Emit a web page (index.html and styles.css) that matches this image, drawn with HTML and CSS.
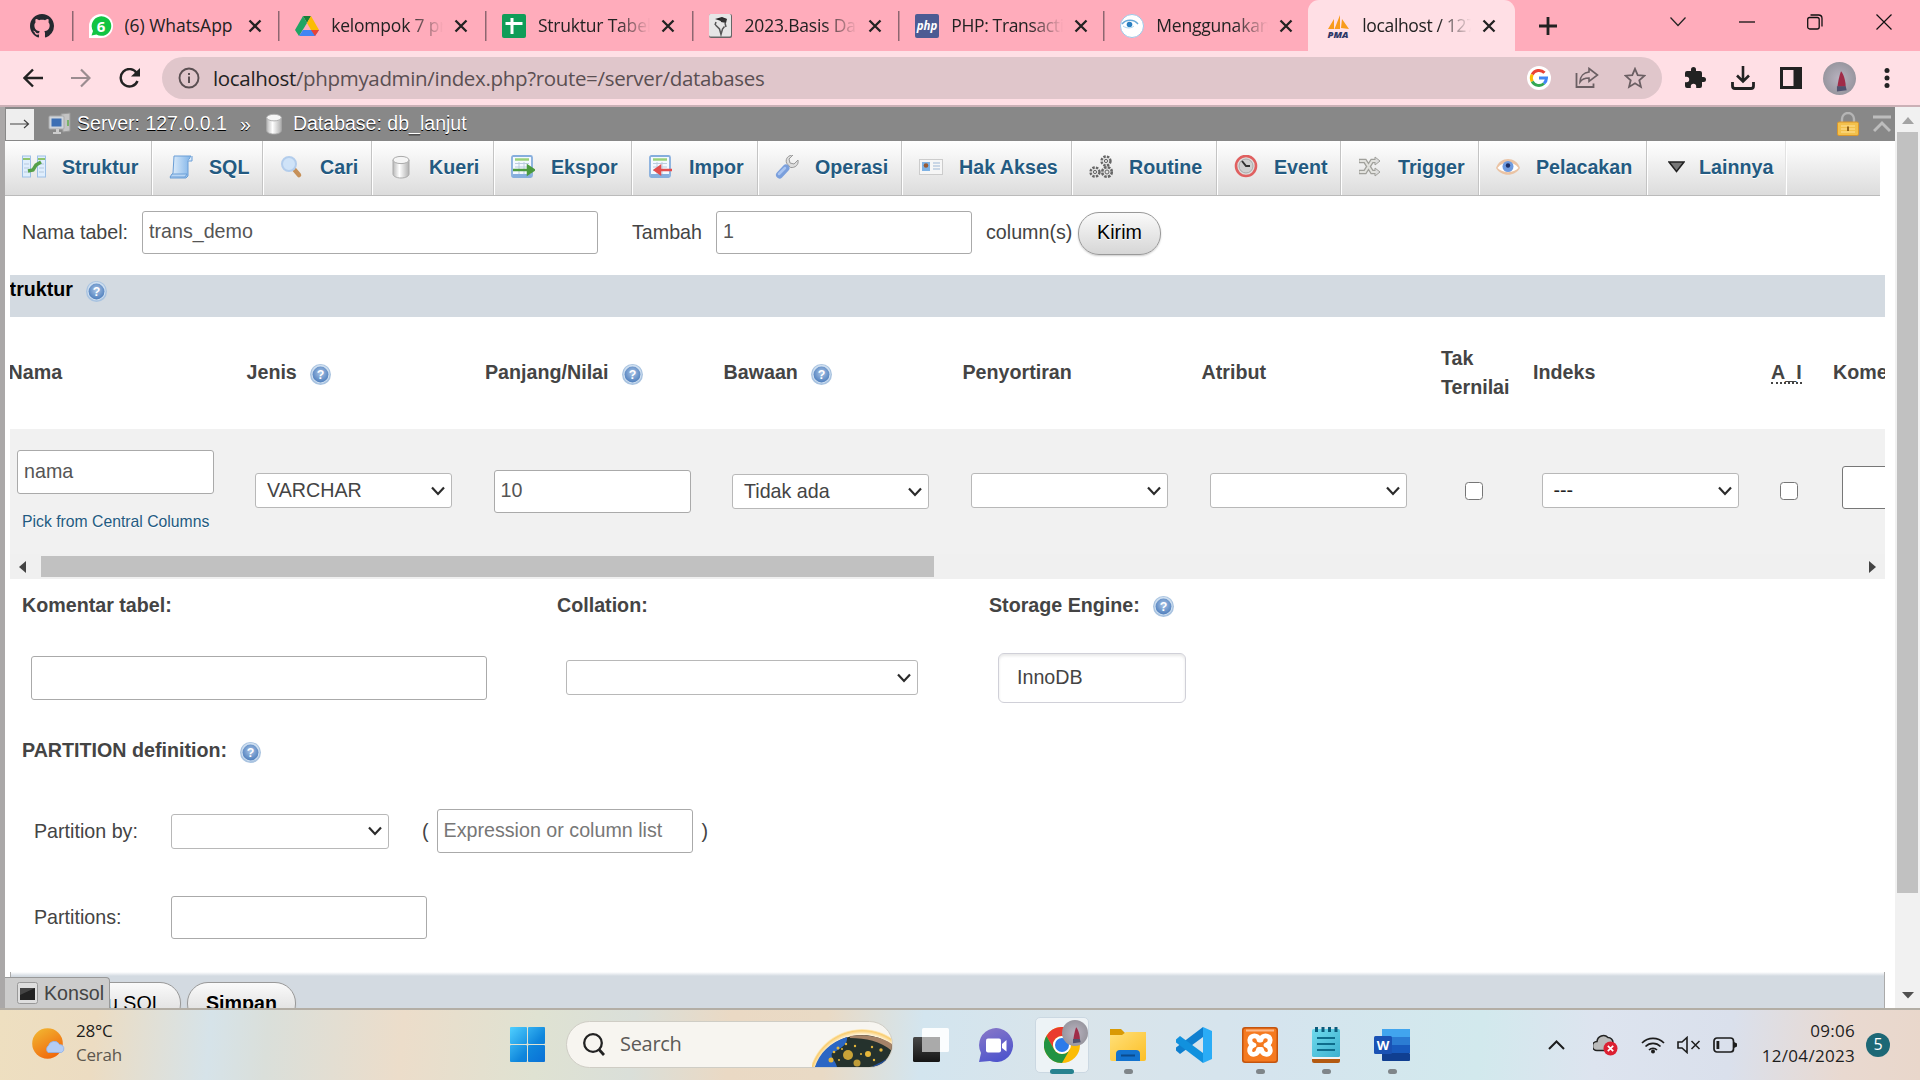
FILE: index.html
```html
<!DOCTYPE html>
<html lang="id">
<head>
<meta charset="utf-8">
<title>localhost / 127.0.0.1 / db_lanjut | phpMyAdmin</title>
<link rel="stylesheet" href="styles.css">
</head>
<body>
<svg width="0" height="0" class="defs" aria-hidden="true">
  <defs>
    <radialGradient id="gHelp" cx=".5" cy=".4" r=".6"><stop offset="0" stop-color="#a9c4e6"/><stop offset="1" stop-color="#4f7fbd"/></radialGradient>
    <linearGradient id="gCyl"><stop offset="0" stop-color="#b9b9b9"/><stop offset=".4" stop-color="#fff"/><stop offset="1" stop-color="#b0b0b0"/></linearGradient>
    <linearGradient id="gSun" x2=".6" y2="1"><stop offset="0" stop-color="#f2bc34"/><stop offset="1" stop-color="#f0690d"/></linearGradient>
    <linearGradient id="gWin" gradientUnits="userSpaceOnUse" x1="0" y1="0" x2="35" y2="35"><stop offset="0" stop-color="#4fd0ff"/><stop offset=".6" stop-color="#0f86dc"/><stop offset="1" stop-color="#0a70d6"/></linearGradient>
    <linearGradient id="gDark" x2="0" y2="1"><stop offset="0" stop-color="#484848"/><stop offset="1" stop-color="#151515"/></linearGradient>
    <linearGradient id="gChat" x2=".4" y2="1"><stop offset="0" stop-color="#8a79c8"/><stop offset="1" stop-color="#5156cc"/></linearGradient>
    <linearGradient id="gFold" x2="1" y2="1"><stop offset="0" stop-color="#ffe07a"/><stop offset="1" stop-color="#fcbf26"/></linearGradient>
    <linearGradient id="gPad" x2="1" y2="1"><stop offset="0" stop-color="#6fdaec"/><stop offset="1" stop-color="#3cb0cf"/></linearGradient>
    <linearGradient id="gScroll" x2="1"><stop offset="0" stop-color="#e8f3fd"/><stop offset="1" stop-color="#7fb3e8"/></linearGradient>
    <radialGradient id="gPhoto"><stop offset="0" stop-color="#b9b3c0"/><stop offset="1" stop-color="#98969f"/></radialGradient>
    <symbol id="close" viewBox="0 0 14 14"><path d="M1.500 1.500l11 11M12.500 1.500l-11 11" stroke="#222" stroke-width="2.300" fill="none"/></symbol>
    <symbol id="caret" viewBox="0 0 14 10"><path d="M1 1.500l6 6.500 6-6.500" fill="none" stroke="#2b2b2b" stroke-width="2.200"/></symbol>
    <symbol id="help" viewBox="0 0 22 22"><circle cx="11" cy="11" r="11" fill="#a9c3e0"/><circle cx="11" cy="10.500" r="9.600" fill="#cfdff0"/><circle cx="11" cy="11" r="8.300" fill="url(#gHelp)"/><text x="11" y="15.500" text-anchor="middle" font-family="Liberation Sans" font-weight="700" font-size="13" fill="#fff">?</text></symbol>
    <symbol id="photo" viewBox="0 0 32 32"><circle cx="16" cy="16" r="16" fill="url(#gPhoto)"/><path d="M17.500 9c-1.500 3-3 11-3.500 15h8c0-6-2-12-4.500-15z" fill="#a02c48"/><path d="M13.500 23.500h8.500l1 4-9.500 1z" fill="#50526e"/></symbol>
    <symbol id="cyl" viewBox="0 0 24 24"><path d="M4 5v14c0 2 3 4 8 4s8-2 8-4V5z" fill="url(#gCyl)" stroke="#aaa"/><ellipse cx="12" cy="5" rx="8" ry="3.600" fill="#f5f5f5" stroke="#aaa"/></symbol>
    <symbol id="sheet" viewBox="0 0 24 24"><rect x="1" y="1" width="20" height="21" rx="1.500" fill="#f4f9ff" stroke="#86aedd" stroke-width="1.800"/><path d="M4 4.500h14" stroke="#9bd07a" stroke-width="2.500"/><path d="M4 8.500h14M4 12h14M4 15.500h14M8 7v12M13 7v12" stroke="#bccde0"/><path d="M2 20h18" stroke="#86aedd" stroke-width="2"/></symbol>
  </defs>
</svg>

<header class="tabstrip">
  <div class="pin"><svg width="24" height="24" viewBox="0 0 16 16"><path fill="#24292f" d="M8 0C3.580 0 0 3.580 0 8c0 3.540 2.290 6.530 5.470 7.590.4.070.55-.17.55-.38 0-.19-.01-.82-.01-1.490-2.010.37-2.530-.49-2.690-.94-.09-.23-.48-.94-.82-1.130-.28-.15-.68-.52-.01-.53.63-.01 1.080.58 1.230.82.72 1.210 1.870.87 2.330.66.07-.52.28-.87.51-1.070-1.780-.2-3.640-.89-3.640-3.950 0-.87.31-1.590.82-2.150-.08-.2-.36-1.020.08-2.120 0 0 .67-.21 2.200.82.64-.18 1.320-.27 2-.27s1.360.09 2 .27c1.530-1.040 2.200-.82 2.200-.82.44 1.100.16 1.920.08 2.120.51.56.82 1.270.82 2.150 0 3.070-1.870 3.750-3.650 3.950.29.25.54.73.54 1.480 0 1.070-.01 1.930-.01 2.200 0 .21.15.46.55.38A8.010 8.010 0 0 0 16 8c0-4.420-3.580-8-8-8z"/></svg></div>
  <div class="tab"><svg width="24" height="24"><path d="M0 24V12A12 12 0 1 1 12 24z" fill="#fff"/><path d="M2.500 21.500L4 17a9.800 9.800 0 1 1 3.500 3.500z" fill="#12c443"/><text x="12" y="17.500" text-anchor="middle" font-family="Open Sans" font-weight="700" font-size="15" fill="#fff">6</text></svg><span class="t">(6) WhatsApp</span><svg class="x" width="14" height="14"><use href="#close"/></svg></div>
  <div class="tab"><svg width="24" height="24"><path d="M8 2h8l-4 7z" fill="#188038"/><path d="M8 2L0 16l4 6L12 9z" fill="#1fa463"/><path d="M16 2l8 14h-8L12 9z" fill="#fbbc04"/><path d="M24 16l-4 6H4l4-6z" fill="#4285f4"/><path d="M16 16h8l-4 6z" fill="#ea4335"/></svg><span class="t">kelompok 7 pro</span><svg class="x" width="14" height="14"><use href="#close"/></svg></div>
  <div class="tab"><svg width="24" height="24"><rect width="24" height="24" rx="2" fill="#109d58"/><path d="M10 4v16M3.500 9.500h17" stroke="#fff" stroke-width="3"/></svg><span class="t">Struktur Tabel d</span><svg class="x" width="14" height="14"><use href="#close"/></svg></div>
  <div class="tab"><svg width="24" height="24"><rect x="0" y="0" width="23" height="24" rx="2" fill="#666"/><rect width="22" height="22.500" rx="1.500" fill="#e6e6e6"/><path d="M6 5l7-2 5 2-6 2z" fill="#222"/><path d="M11 4l7 1-1 4-5-1z" fill="#333"/><path d="M7 8l-1 3M16 9l1 4M6.500 11l4 4 1.500 5.500 1.500-5.500 2-2.500" stroke="#555" fill="none" stroke-width="1.500"/></svg><span class="t">2023.Basis Data</span><svg class="x" width="14" height="14"><use href="#close"/></svg></div>
  <div class="tab short"><svg width="24" height="24"><rect width="24" height="24" rx="2" fill="#4c5b93"/><text x="12" y="16" text-anchor="middle" font-family="Open Sans" font-weight="700" font-style="italic" font-size="11.500" fill="#fff">php</text></svg><span class="t">PHP: Transactions</span><svg class="x" width="14" height="14"><use href="#close"/></svg></div>
  <div class="tab last"><svg width="24" height="24"><circle cx="12" cy="12" r="11.500" fill="#fff" stroke="#9cc8e8"/><path d="M2 10c4-5 12-5 16 0" stroke="#67a9d8" stroke-width="1.400" fill="none"/><circle cx="9.500" cy="10.500" r="2.800" fill="#2a7fc0"/><path d="M3 12c4 3 9 2 11 0" stroke="#a8d4ee" fill="none"/></svg><span class="t">Menggunakan</span><svg class="x" width="14" height="14"><use href="#close"/></svg></div>
  <div class="tab active"><svg width="24" height="24"><path d="M2 15l6-10v10zM8.500 15L14 1v14zM15 14l1-9 7 10z" fill="#f89c1c"/><text x="12" y="24" text-anchor="middle" font-family="Open Sans" font-weight="800" font-style="italic" font-size="9.500" fill="#2d3767">PMA</text></svg><span class="t">localhost / 127.</span><svg class="x" width="14" height="14"><use href="#close"/></svg></div>
  <svg class="plus" width="18" height="18"><path d="M9 0v18M0 9h18" stroke="#222" stroke-width="2.800"/></svg>
  <div class="wincontrols">
    <svg width="16" height="10"><path d="M.5.500l7.500 8 7.500-8" fill="none" stroke="#222" stroke-width="1.200"/></svg>
    <svg width="16" height="10"><path d="M0 5h16" stroke="#111" stroke-width="1.300"/></svg>
    <svg width="16" height="16"><rect x=".7" y="3.500" width="11.500" height="11.500" rx="2" fill="none" stroke="#111" stroke-width="1.300"/><path d="M3.500 1h8c2 0 3.500 1.500 3.500 3.500v8" fill="none" stroke="#111" stroke-width="1.300"/></svg>
    <svg width="16" height="16"><path d="M.5.500l15 15M15.500.500l-15 15" stroke="#111" stroke-width="1.200"/></svg>
  </div>
</header>

<div class="toolbar">
  <svg class="nav" width="20" height="20"><path d="M20 10H2M10 1.500L1.500 10l8.500 8.500" fill="none" stroke="#222" stroke-width="2.400"/></svg>
  <svg class="nav" width="20" height="20"><path d="M0 10h18M10 1.500l8.500 8.500-8.500 8.500" fill="none" stroke="#9b8c90" stroke-width="2.200"/></svg>
  <svg class="nav" width="22" height="20"><path d="M18.500 13a8.700 8.700 0 1 1-.8-8" fill="none" stroke="#222" stroke-width="2.400"/><path d="M21 0v8.500h-9z" fill="#222"/></svg>
  <div class="omnibox">
    <svg width="22" height="22"><circle cx="11" cy="11" r="9.500" fill="none" stroke="#5a4f52" stroke-width="1.900"/><path d="M11 9.500V16M11 6v2" stroke="#5a4f52" stroke-width="2"/></svg>
    <span class="url"><b>localhost</b>/phpmyadmin/index.php?route=/server/databases</span>
    <svg width="24" height="24" viewBox="0 0 24 24"><circle cx="12" cy="12" r="12" fill="#fff"/><g fill="none" stroke-width="3"><path d="M5.200 8.500A7.600 7.600 0 0 1 17.500 6.800" stroke="#ea4335"/><path d="M5.200 15.500a7.600 7.600 0 0 1 0-7" stroke="#fbbc05"/><path d="M17 17.500a7.600 7.600 0 0 1-11.800-2" stroke="#34a853"/><path d="M12 12h7.500a7.600 7.600 0 0 1-2.500 5.500" stroke="#4285f4"/></g></svg>
    <svg class="sh" width="24" height="22"><path d="M1.500 6v14h17v-3.500" fill="none" stroke="#6b5f63" stroke-width="1.800"/><path d="M14 1.500L22.500 8 14 14.500V11c-4 0-7 1-9 4 0-6 4-9.500 9-10z" fill="none" stroke="#6b5f63" stroke-width="1.600"/></svg>
    <svg width="22" height="22" viewBox="0 0 22 22"><path d="M11 1.800l2.700 6.300 6.800.6-5.200 4.500 1.600 6.700L11 16.300l-5.900 3.600 1.600-6.700L1.500 8.700l6.800-.6z" fill="none" stroke="#6b5f63" stroke-width="1.800"/></svg>
  </div>
  <svg class="puzzle" width="24" height="24" viewBox="0 0 24 24"><path fill="#222" d="M20.500 11H19V7a2 2 0 0 0-2-2h-4V3.500a2.500 2.500 0 0 0-5 0V5H4a2 2 0 0 0-2 2v3.800h1.500a2.700 2.700 0 0 1 0 5.400H2V20a2 2 0 0 0 2 2h3.800v-1.500a2.700 2.700 0 0 1 5.400 0V22H17a2 2 0 0 0 2-2v-4h1.500a2.500 2.500 0 0 0 0-5z"/></svg>
  <svg class="download" width="24" height="24"><path d="M12 0v15M6 9.500l6 6 6-6" fill="none" stroke="#222" stroke-width="2.600"/><path d="M1.500 16v4c0 1.500 1 2.500 2.500 2.500h16c1.500 0 2.500-1 2.500-2.500v-4" fill="none" stroke="#222" stroke-width="2.800"/></svg>
  <svg class="panel" width="22" height="22"><path fill="#222" fill-rule="evenodd" d="M0 0h22v22H0zM3 3v16h10.500V3z"/></svg>
  <svg class="avatar" width="33" height="33"><use href="#photo"/></svg>
  <svg class="dots" width="6" height="20"><circle cx="3" cy="2.500" r="2.500" fill="#222"/><circle cx="3" cy="10" r="2.500" fill="#222"/><circle cx="3" cy="17.500" r="2.500" fill="#222"/></svg>
</div>

<main class="page">
  <div class="navedge"></div>
  <div class="content">
    <div class="crumbs">
      <span class="toggle"><svg width="20" height="10"><path d="M0 5h18M14 1l4.500 4L14 9" fill="none" stroke="#444" stroke-width="1.200"/></svg></span>
      <svg class="srv" width="24" height="24"><path d="M13 2l9-1v18l-7 1z" fill="#c4c4c4" stroke="#999"/><path d="M19 8h2v6h-2z" fill="#79b36a"/><rect x="1" y="4" width="15" height="13" rx="1" fill="#cfd4da" stroke="#aaa"/><rect x="3.500" y="6.500" width="10" height="8" fill="#3d6fb4"/><path d="M5 20h8v2H5zM8 17h3v3H8z" fill="#ccc"/></svg>
      <span class="c1">Server: 127.0.0.1</span><span class="raq">»</span>
      <svg width="22" height="24" viewBox="1 0 22 24"><use href="#cyl"/></svg>
      <span class="c2">Database: db_lanjut</span>
      <svg class="lock" width="22" height="24"><path d="M5 11V7a6 6 0 0 1 12 0v4" fill="none" stroke="#b5b5b5" stroke-width="2.400"/><rect x=".5" y="10" width="21" height="13.500" rx="1.500" fill="#f3c14c" stroke="#d9962c"/><path d="M4 14h14M4 17h14M4 20h14" stroke="#ffe39a"/><path d="M11 14.500v4.500" stroke="#8a5a10" stroke-width="1.800"/></svg>
      <svg class="top" width="18" height="18"><path d="M0 2h18M1 16l8-8 8 8" fill="none" stroke="#bdbdbd" stroke-width="3"/></svg>
    </div>

    <nav class="menu">
      <a style="width:147px"><svg width="24" height="24"><rect x="0.500" y="1" width="8" height="21" fill="#dfeefd" stroke="#9dc0e6"/><rect x="15.500" y="1" width="8" height="21" fill="#dfeefd" stroke="#9dc0e6"/><path d="M1 4h7M16 4h7" stroke="#8fc46d" stroke-width="2"/><path d="M2 9h5M2 13h5M2 17h5M17 9h5M17 13h5M17 17h5" stroke="#b7c9de"/><path d="M6 16l5-1 3-5 5-3" stroke="#55a048" stroke-width="3.500" fill="none"/></svg>Struktur</a>
      <a style="width:111px"><svg width="24" height="24"><path d="M5 1h17l-3 5v15l-2 2H1l3-5z" fill="url(#gScroll)" stroke="#6a9ed6"/><path d="M19 6h4V1" fill="#d8eafb" stroke="#6a9ed6"/><path d="M1 22h15l2-3H3z" fill="#b8d6f5" stroke="#6a9ed6"/></svg>SQL</a>
      <a style="width:109px"><svg width="24" height="24"><path d="M13 13l6 7" stroke="#c69058" stroke-width="4.500" stroke-linecap="round"/><circle cx="9" cy="9" r="7" fill="#cfe3f8" stroke="#b3cdec" stroke-width="2"/></svg>Cari</a>
      <a style="width:122px"><svg width="24" height="24"><use href="#cyl"/></svg>Kueri</a>
      <a style="width:138px"><svg width="24" height="24"><use href="#sheet"/><path d="M2 15h16M17 11l6 4-6 4z" stroke="#4b9a3e" stroke-width="2.500" fill="#4b9a3e"/></svg>Ekspor</a>
      <a style="width:126px"><svg width="24" height="24"><use href="#sheet"/><path d="M23 15H9M11 11.500l-5 3.500 5 3.500z" stroke="#e34d4d" stroke-width="2.500" fill="#e34d4d"/></svg>Impor</a>
      <a style="width:144px"><svg width="24" height="24"><path d="M23 5l-4 4-4-1-1-4 4-4c-4 0-8 3-6.500 8l4 4.500C20 13 24 10 23 5z" fill="#ddd" stroke="#999"/><path d="M11 13L4.500 20" stroke="#7a9fdc" stroke-width="7" stroke-linecap="round"/><path d="M10 13L4 19" stroke="#a9c4f0" stroke-width="2.500" stroke-linecap="round"/></svg>Operasi</a>
      <a style="width:170px"><svg width="24" height="24"><rect x=".5" y="4.500" width="23" height="15" fill="#f6f6f6" stroke="#ccc"/><rect x="3" y="7" width="8" height="9" fill="#7eb2e4"/><circle cx="7" cy="10.500" r="2.300" fill="#9a5a32"/><path d="M14 8h7M14 11h7M14 14h7" stroke="#9db7d6"/></svg>Hak Akses</a>
      <a style="width:145px"><svg width="24" height="24"><g fill="#e4e4e4" stroke="#666"><circle cx="17" cy="6" r="4.500" stroke-width="2.400" stroke-dasharray="2.400 1.200"/><circle cx="17" cy="6" r="1.600"/><circle cx="6" cy="17" r="4.500" stroke-width="2.400" stroke-dasharray="2.400 1.200"/><circle cx="6" cy="17" r="1.600"/><circle cx="18" cy="17" r="4.800" stroke-width="2.600" stroke-dasharray="2.600 1.200"/><circle cx="18" cy="17" r="2"/></g></svg>Routine</a>
      <a style="width:124px"><svg width="24" height="24"><circle cx="12" cy="11" r="10" fill="#dedede" stroke="#e06060" stroke-width="2.600"/><circle cx="12" cy="11" r="7" fill="#d0d0d0" stroke="#aaa"/><path d="M8 6l4 5h4" fill="none" stroke="#333" stroke-width="2"/></svg>Event</a>
      <a style="width:138px"><svg width="24" height="24"><path d="M1 6h6l7 11h4M1 17h6l7-11h4" fill="none" stroke="#a0a09b" stroke-width="4.500"/><path d="M17 2l5 4-5 4zM17 13l5 4-5 4z" fill="#ddd" stroke="#a0a09b"/><path d="M1.500 6H7l7 11h4M1.500 17H7l7-11h4" fill="none" stroke="#e2e2de" stroke-width="2"/></svg>Trigger</a>
      <a style="width:168px"><svg width="24" height="24"><path d="M0 13C4 1 20 1 24 13c-5 9-19 9-24 0z" fill="#eac3a4"/><path d="M1.500 13C6 5.500 18 5.500 22.500 13c-5 5.500-16 5.500-21 0z" fill="#fff"/><circle cx="12" cy="11.500" r="5.500" fill="#6f9be0"/><circle cx="12" cy="10.500" r="2.200" fill="#1c2f66"/></svg>Pelacakan</a>
      <a class="more" style="width:139px"><svg width="17" height="12"><path d="M1 1h15L8.500 10.500z" fill="#777" stroke="#222" stroke-width="1.600"/></svg>Lainnya</a>
    </nav>

    <div class="bar">
      <label class="l1">Nama tabel:</label><input class="in w456" value="trans_demo">
      <label class="l2">Tambah</label><input class="in w256" value="1">
      <label class="l3">column(s)</label><button class="btn kirim">Kirim</button>
    </div>

    <section class="fieldset">
      <div class="legend"><span class="s">Struktur</span><svg width="21" height="21"><use href="#help"/></svg></div>
      <div class="grid head">
        <span>Nama</span>
        <span>Jenis<svg width="21" height="21"><use href="#help"/></svg></span>
        <span>Panjang/Nilai<svg width="21" height="21"><use href="#help"/></svg></span>
        <span>Bawaan<svg width="21" height="21"><use href="#help"/></svg></span>
        <span>Penyortiran</span><span>Atribut</span><span>Tak<br>Ternilai</span><span>Indeks</span><span><abbr>A_I</abbr></span><span>Komentar</span>
      </div>
      <div class="grid row">
        <div class="name"><input class="in" value="nama"><a>Pick from Central Columns</a></div>
        <div><span class="sel">VARCHAR<svg width="14" height="10"><use href="#caret"/></svg></span></div>
        <div><input class="in len" value="10"></div>
        <div class="lower"><span class="sel">Tidak ada<svg width="14" height="10"><use href="#caret"/></svg></span></div>
        <div><span class="sel"><svg width="14" height="10"><use href="#caret"/></svg></span></div>
        <div><span class="sel"><svg width="14" height="10"><use href="#caret"/></svg></span></div>
        <div class="chk n"><i></i></div>
        <div><span class="sel dash">---<svg width="14" height="10"><use href="#caret"/></svg></span></div>
        <div class="chk"><i></i></div>
        <div class="kom"><input class="in"></div>
      </div>
      <div class="hscroll"><svg width="7" height="12"><path d="M7 0v12L0 6z" fill="#444"/></svg><span></span><svg class="r" width="7" height="12"><path d="M0 0v12l7-6z" fill="#444"/></svg></div>
    </section>

    <div class="opts labels"><b class="o1">Komentar tabel:</b><b class="o2">Collation:</b><b class="o3">Storage Engine:<svg width="21" height="21"><use href="#help"/></svg></b></div>
    <div class="opts fields"><input class="in w456"><span class="sel coll"><svg width="14" height="10"><use href="#caret"/></svg></span><span class="engine">InnoDB</span></div>
    <div class="partdef"><b>PARTITION definition:<svg width="21" height="21"><use href="#help"/></svg></b></div>
    <div class="part p1"><span class="pl">Partition by:</span><span class="sel pb"><svg width="14" height="10"><use href="#caret"/></svg></span><span class="op">(</span><input class="in w256" placeholder="Expression or column list"><span class="cp">)</span></div>
    <div class="part p2"><span class="pl">Partitions:</span><input class="in w256"></div>
    <div class="submit"><button class="btn sql">Pratinjau SQL</button><button class="btn simpan">Simpan</button></div>
    <div class="console"><svg width="21" height="22"><rect x=".5" y=".5" width="20" height="21" rx="2" fill="#dedede" stroke="#999"/><rect x="3" y="6" width="15" height="12" fill="#222"/><path d="M3 6h15L3 13z" fill="#444"/></svg>Konsol</div>
  </div>
  <div class="vscroll"><svg width="12" height="8"><path d="M0 7l6-7 6 7z" fill="#a3a3a3"/></svg><span></span><svg class="d" width="12" height="7"><path d="M0 0h12L6 6.500z" fill="#505050"/></svg></div>
</main>

<footer class="taskbar">
  <svg class="sun" width="34" height="32"><circle cx="15.500" cy="15.500" r="15.300" fill="url(#gSun)"/><path d="M16 24.500a4.500 4.500 0 0 1 .5-7 6 6 0 0 1 11-1 4.200 4.200 0 0 1 2 8z" fill="#b4cdf5" stroke="#8fb0ea" stroke-width=".8"/></svg>
  <div class="weather"><span>28°C</span><small>Cerah</small></div>
  <svg class="start" width="35" height="35"><g fill="url(#gWin)"><rect width="17" height="17" rx="1"/><rect x="18" width="17" height="17" rx="1"/><rect y="18" width="17" height="17" rx="1"/><rect x="18" y="18" width="17" height="17" rx="1"/></g></svg>
  <div class="search"><svg width="22" height="23"><circle cx="10" cy="10" r="8.800" fill="none" stroke="#222" stroke-width="2.300"/><path d="M16 16.500l5 5.500" stroke="#222" stroke-width="2.800"/></svg><span>Search</span>
    <svg class="globe" width="80" height="38" viewBox="0 0 80 38"><defs><radialGradient id="gGl" cx=".5" cy=".5" r=".5"><stop offset=".82" stop-color="#fff0cf"/><stop offset=".9" stop-color="#fff3d8"/><stop offset=".97" stop-color="#f9cd70"/><stop offset="1" stop-color="#fdf0d0"/></radialGradient></defs><circle cx="50" cy="54" r="54" fill="url(#gGl)"/><circle cx="50" cy="56" r="50" fill="#25322d"/><path d="M3 38C7 25 18 13 35 8c1 7-5 11-15 16-2 5 4 8 5 14z" fill="#2b66c4"/><path d="M60 38c5-4 12-5 20-12v12z" fill="#234f9c"/><path d="M38 7c14-2 30 0 42 8v7C68 12 54 9 38 9z" fill="#a58368"/><g fill="#e6b73b"><circle cx="36" cy="26" r="5" opacity=".85"/><circle cx="56" cy="25" r="3"/><circle cx="45" cy="34" r="3.500" opacity=".8"/><circle cx="19" cy="31" r="2.500"/><circle cx="69" cy="21" r="1.700"/><circle cx="26" cy="19" r="1.500"/><circle cx="34" cy="15" r="1.200"/><circle cx="43" cy="17" r="1.200"/><circle cx="60" cy="18" r="1.200"/><circle cx="30" cy="20" r="1"/><circle cx="22" cy="23" r="1.300"/><circle cx="49" cy="25" r="1"/><circle cx="62" cy="31" r="1.200"/><circle cx="27" cy="31" r="1"/></g></svg>
  </div>
  <svg class="tv" width="36" height="36"><rect y="10" width="27" height="25" rx="1.500" fill="url(#gDark)"/><rect x="9" y="1" width="27" height="24" rx="1.500" fill="#fff" opacity=".9"/><path d="M9 10h18v15H9z" fill="#aaa"/></svg>
  <svg class="app" width="36" height="36"><path d="M1 35l2-9A17 17 0 1 1 12 34z" fill="url(#gChat)"/><rect x="8" y="11.500" width="15" height="14" rx="2" fill="#fff"/><path d="M24 17l4.500-4v11.500L24 21z" fill="#fff"/></svg>
  <div class="app chrome"><svg width="36" height="36"><circle cx="18" cy="18" r="18" fill="#fbbc05"/><path d="M2.400 9A18 18 0 0 1 33.600 9H18a9 9 0 0 0-7.800 13.500z" fill="#ea3b2e"/><path d="M2.400 9A18 18 0 0 0 18 36l7.800-13.500a9 9 0 0 1-15.600 0z" fill="#229342"/><circle cx="18" cy="18" r="9" fill="#fff"/><circle cx="18" cy="18" r="7" fill="#2d7bea"/></svg><svg class="badge" width="26" height="26"><use href="#photo"/></svg><i></i></div>
  <div class="app dot"><svg width="36" height="36"><path d="M0 2h11l4 4h21v10H0z" fill="#d99a05"/><path d="M0 8h12l4-3h20v27q0 2-2 2H2q-2 0-2-2z" fill="url(#gFold)"/><path d="M6 34v-7q0-4 4-4h16q4 0 4 4v7z" fill="#1373cf"/><path d="M11 28.500h14" stroke="#0b4b8c" stroke-width="2"/></svg><i></i></div>
  <div class="app"><svg width="36" height="36"><path d="M27 0v10L4 27 0 23.500v-3z" fill="#0f7fcf"/><path d="M0 12.500L4 9l23 17v10L0 15.500z" fill="#1191de"/><path d="M27 0l9 4v28l-9 4z" fill="#2aacf6"/></svg></div>
  <div class="app dot"><svg width="36" height="36"><rect width="36" height="36" rx="3" fill="#c4550f"/><rect x="1.500" y="1.500" width="33" height="33" rx="2" fill="#f57a20"/><path d="M4 3.500h28" stroke="#fbb98a" stroke-width="2"/><path d="M17 13C17 7.500 8 7.500 7.800 13c0 3 1.700 4.500 4.200 5-3 1-4.700 3-4.200 6.500C8.800 29 16 28 16.500 22.500h3C20 28 27.200 29 28.200 24.500c.5-3.500-1.200-5.500-4.200-6.500 2.500-.5 4.200-2 4.200-5C28 7.500 19 7.500 19 13z" fill="none" stroke="#fff" stroke-width="4.800" stroke-linejoin="round"/></svg><i></i></div>
  <div class="app dot"><svg width="36" height="36"><path d="M4 29h28v5q0 2-2 2H6q-2 0-2-2z" fill="#b35a12"/><rect x="4" y="27" width="28" height="5" fill="#f3f3f3"/><rect x="4" y="2" width="28" height="28" rx="1.500" fill="url(#gPad)"/><path d="M9 11h18M9 17h18M9 23h18" stroke="#0e6d8c" stroke-width="2"/><path d="M8.500 0v5M15 0v5M21.500 0v5M28 0v5" stroke="#0c5c7c" stroke-width="3"/></svg><i></i></div>
  <div class="app dot"><svg width="36" height="36"><rect x="8" y="2" width="28" height="8" fill="#41a5ee"/><rect x="8" y="10" width="28" height="8" fill="#2b7cd3"/><rect x="8" y="18" width="28" height="8" fill="#185abd"/><rect x="8" y="26" width="28" height="8" rx="1" fill="#103f91"/><rect y="9" width="18" height="18" rx="1.500" fill="#1a52b4"/><text x="9" y="23" text-anchor="middle" font-family="Open Sans" font-weight="700" font-size="13" fill="#fff">W</text></svg><i></i></div>
  <div class="tray">
    <svg width="17" height="10"><path d="M1 9l7.500-7.500L16 9" fill="none" stroke="#1d1d1d" stroke-width="2"/></svg>
    <svg class="cl" width="25" height="22"><path d="M4 16.500a4.500 4.500 0 0 1 0-9 6.500 6.500 0 0 1 11-4 5 5 0 0 1 5 5v8z" fill="#bbb" stroke="#222" stroke-width="1.500"/><circle cx="17.500" cy="14.500" r="7" fill="#dc2032"/><path d="M14.800 11.800l5.400 5.400M20.200 11.800l-5.400 5.400" stroke="#fff" stroke-width="1.700"/></svg>
    <svg class="wf" width="24" height="18"><g fill="none" stroke="#1d1d1d" stroke-width="1.700"><path d="M1 7a15.500 15.500 0 0 1 22 0M4.500 10.500a10.600 10.600 0 0 1 15 0M8 14a5.700 5.700 0 0 1 8 0"/></g><circle cx="12" cy="15.500" r="2" fill="#1d1d1d"/></svg>
    <svg class="sp" width="24" height="18"><path d="M1 6h4l5-4.500v15L5 12H1z" fill="none" stroke="#1d1d1d" stroke-width="1.600"/><path d="M14.500 5l8 8M22.500 5l-8 8" stroke="#1d1d1d" stroke-width="1.500"/></svg>
    <svg class="bt" width="24" height="16"><rect x="1" y="1" width="19.500" height="14" rx="3" fill="none" stroke="#1d1d1d" stroke-width="1.700"/><rect x="3.500" y="4" width="2.800" height="8" fill="#1d1d1d"/><path d="M21 5l3 1.500v3L21 11z" fill="#1d1d1d"/></svg>
    <div class="clock"><span>09:06</span><span>12/04/2023</span></div>
    <span class="notif">5</span>
  </div>
</footer>
</body>
</html>
```
FILE: styles.css
```css
* { box-sizing: border-box; }
body { margin: 0; width: 1920px; height: 1080px; overflow: hidden; display: flex; flex-direction: column; font-family: "Liberation Sans", Arial, sans-serif; font-size: 19.68px; color: #444; background: #fff; }
svg { display: block; flex: none; }
.defs { position: absolute; }

.tabstrip { height: 51px; flex: none; display: flex; align-items: center; background: #ffacbb; font-family: "Open Sans", sans-serif; font-size: 17.5px; color: #222; }
.pin { width: 71.500px; padding-left: 30px; }
.tab { width: 206.700px; height: 51px; display: flex; align-items: center; padding-left: 17px; background: linear-gradient(#8d6670, #8d6670) 0 11px / 1.500px 30px no-repeat; }
.tab .t { width: 112px; margin: -1px 0 0 12px; overflow: hidden; white-space: nowrap; letter-spacing: -.2px; -webkit-mask-image: linear-gradient(90deg, #000 70%, transparent); mask-image: linear-gradient(90deg, #000 70%, transparent); }
.tab:nth-child(2) .t { -webkit-mask-image: none; mask-image: none; letter-spacing: -.05px; }
.tab:nth-child(6) .t, .tab:nth-child(8) .t { letter-spacing: -.35px; }
.tab .x { margin-left: 11px; }
.tab.short { width: 205px; }
.tab.last { width: 205px; }
.tab.active { background: #ffdfe5; border-radius: 11px 11px 0 0; padding-left: 18px; width: 207px; }
.tab.active .t { margin-left: 12px; width: 109px; }
.plus { margin-left: 24px; }
.wincontrols { display: flex; align-items: center; gap: 52.500px; margin-left: 113px; margin-top: -7px; }

.toolbar { height: 56px; flex: none; display: flex; align-items: center; background: #ffdfe5; border-bottom: 2px solid #cbb0b6; padding-left: 23px; }
.nav + .nav { margin-left: 28px; }
.omnibox { width: 1500px; height: 42px; flex: none; margin: 0 21px; border-radius: 21px; background: #e0c6cb; display: flex; align-items: center; padding: 0 16px 0 16px; font-family: "Open Sans", sans-serif; font-size: 20.500px; color: #5a4f52; }
.omnibox .url { margin-left: 13px; flex: 1; white-space: nowrap; letter-spacing: -.33px; }
.omnibox b { font-weight: 400; color: #222; }
.omnibox .sh { margin: 0 25px 0 24px; }
.download { margin-left: 24px; }
.panel { margin-left: 25px; }
.avatar { margin-left: 21px; }
.dots { margin-left: 28px; }

.page { height: 901px; flex: none; display: flex; overflow: hidden; }
.navedge { width: 5px; background: #aaa8a8; }
.content { width: 1890px; position: relative; }
.crumbs { height: 34px; background: #888; display: flex; align-items: center; color: #fff; text-shadow: 0 1px 0 #000; font-size: 19.550px; white-space: nowrap; }
.toggle { width: 28px; height: 31px; margin-left: 1px; background: #eee; display: flex; align-items: center; justify-content: center; }
.srv { margin-left: 14px; }
.c1 { margin: -1px 0 0 5px; width: 149px; }
.raq { margin: 0 13px 0 14px; }
.c2 { margin: -1px 0 0 7px; flex: 1; }
.lock { margin-right: 14px; }
.top { margin-right: 4px; }

.menu { width: 1875px; height: 55px; display: flex; background: linear-gradient(#fff, #dcdcdc); border-bottom: 1px solid #bbb; font-weight: 700; }
.menu a { display: flex; align-items: center; gap: 16px; padding: 0 0 2px 17px; border-right: 1px solid #c4c4c4; box-shadow: 1px 0 0 #fff; color: #235a81; text-shadow: 0 1px 0 #fff; white-space: nowrap; }
.menu a.more { padding-left: 21px; gap: 14px; border-right-color: #e3e3e3; }

.in { height: 43px; border: 1.500px solid #aaa; border-radius: 3px; padding: 0 6px 2px; font: 19.680px "Liberation Sans", Arial, sans-serif; color: #555; background: #fff; outline: none; }
.in::placeholder { color: #777; }
.w456 { width: 456px; } .w256 { width: 256px; }
.btn { border: 1px solid #999; border-radius: 21px; height: 43px; padding: 0; font: 19.680px "Liberation Sans", Arial, sans-serif; color: #000; background: linear-gradient(#fafafa, #d6d6d6); text-shadow: 0 1px 0 #fff; box-shadow: 0 1px 2px #ccc; }
.sel { width: 197px; height: 35px; border: 1.500px solid #b8b8b8; border-radius: 3px; background: #fff; display: flex; align-items: center; padding: 0 6px 0 11px; color: #444; }
.sel svg { margin-left: auto; }
.dash { color: #222; }

.bar { height: 79px; padding: 0 0 7px 17px; display: flex; align-items: center; white-space: nowrap; }
.l1 { width: 120px; } .l2 { width: 84px; margin-left: 34px; } .l3 { width: 92px; margin-left: 14px; }
.kirim { width: 83px; margin-top: 2px; padding-bottom: 2px; }

.fieldset { margin: 0 10px 0 5px; width: 1875px; overflow: hidden; }
.legend { height: 42px; background: #d3dae1; display: flex; font-weight: 700; color: #000; padding-top: 3px; }
.legend .s { margin-left: -13.500px; width: 89px; }
.legend svg { margin-top: 3px; }
.grid { display: grid; grid-template-columns: 238px 238.500px 238.500px 239px 239px 239.500px 92px 238px 62px 260px; margin-left: -1.500px; width: 2100px; }
.head { height: 112px; align-items: center; font-weight: 700; line-height: 29px; padding-bottom: 1px; }
.head span { display: flex; align-items: center; white-space: nowrap; }
.head span:nth-child(7) { display: block; }
.head svg { margin: 4px 0 0 13px; }
.head abbr { line-height: 20px; border-bottom: 2px dotted #444; }
.row { height: 125px; background: #f1f1f1; }
.row > div { padding: 44px 0 0 8.500px; }
.row .in { width: 197px; }
.row > .name { padding-top: 21px; padding-left: 8.500px; }
.row .name .in { height: 44px; display: block; }
.row .name a { display: block; font-size: 15.750px; color: #235a81; margin: 18.500px 0 0 5px; text-shadow: 0 1px 0 #fff; white-space: nowrap; }
.row .lower { padding-top: 45px; }
.len { margin-top: -3px; display: block; }
.row > .chk { padding: 53px 0 0 9px; }
.row > .chk.n { padding-left: 24px; }
.chk i { display: block; width: 18px; height: 18px; border: 1.500px solid #767676; border-radius: 3.500px; background: #fff; }
.row > .kom { padding-top: 37px; }
.kom .in { border-color: #777; display: block; }
.hscroll { height: 25px; background: #f0f0f0; display: flex; align-items: center; padding: 0 9px; }
.hscroll span { width: 893px; height: 21px; background: #c1c1c1; margin-left: 15px; }
.hscroll .r { margin-left: auto; }

.opts { display: flex; align-items: center; }
.labels { height: 52px; padding-left: 17px; }
.labels b { display: flex; align-items: center; height: 24px; }
.o1 { width: 535px; } .o2 { width: 432px; }
.opts svg, .partdef svg { margin: 3px 0 0 13px; }
.labels b svg { margin-top: 2px; }
.fields { height: 93px; padding: 0 0 0 26px; }
.fields .in { height: 44px; }
.coll { width: 352px; margin-left: 79px; }
.fields .coll svg { margin: 0 0 0 auto; }
.engine { width: 188px; height: 50px; margin-left: 80px; border: 1.500px solid #d0d0d8; border-radius: 6px; box-shadow: inset 0 2px 3px #e8e8e8; padding: 12px 0 0 18px; }
.partdef { height: 53px; padding-left: 17px; display: flex; align-items: center; }
.partdef b { display: flex; align-items: center; }
.part { display: flex; align-items: center; padding-left: 29px; }
.pl { width: 137px; }
.p1 { height: 108px; }
.p1 .in { height: 44px; }
.pb { width: 218px; }
.op { margin: 0 8px 0 33px; } .cp { margin-left: 9px; }
.p2 { height: 64px; }
.submit { margin: 23px 10px 0 5px; height: 60px; border: 1.500px solid #aaa; border-top: 0; background: linear-gradient(#fff, #d3dae1 4px); padding: 10px 0 0 11px; display: flex; gap: 6px; }
.sql { width: 159px; } .simpan { width: 109px; font-weight: 700; }
.console { position: absolute; left: 0; bottom: 0; width: 105px; height: 31px; background: #ccc; border: 1px solid #999; border-left: 0; border-bottom: 0; border-radius: 0 4px 0 0; display: flex; align-items: center; padding-left: 12px; gap: 6px; }

.vscroll { width: 25px; background: #f1f1f1; display: flex; flex-direction: column; align-items: center; padding: 10px 0 9px; }
.vscroll span { width: 21px; height: 761px; margin-top: 7px; background: #c1c1c1; }
.vscroll .d { margin-top: auto; }

.taskbar { height: 73px; flex: none; border-top: 2px solid #b3aea5; display: flex; align-items: center; padding: 0 30px 2px 32px; font-family: "Open Sans", sans-serif; font-size: 17px; color: #1d1d1d; background: linear-gradient(95deg, #eedfc0 0, #ecdcc2 5%, #d6e3e9 11%, #dadfda 14%, #ecddca 21%, #dfe2d2 28%, #dadfd9 33%, #ead9c4 38%, #e9dac5 43%, #d3e5ef 48%, #d9e4ea 56%, #d5e4ee 66%, #d2e9ed 77%, #dde4ef 83%, #dae0ec 90%, #e9d9d0 96%, #e9d7cb 100%); }
.sun { margin-bottom: 1px; }
.weather { width: 434px; margin-left: 10px; line-height: 24px; display: flex; flex-direction: column; letter-spacing: -.2px; margin-top: -3px; }
.weather small { font-size: 17px; color: #5d574e; }
.search { width: 327px; height: 47px; margin-left: 21px; border: 1.500px solid #cfcdc5; border-radius: 24px; background: #f7f5f0; display: flex; align-items: center; padding-left: 16px; overflow: hidden; font-size: 20px; color: #5c5a57; }
.search span { margin: -2px 0 0 15px; letter-spacing: -.3px; }
.search .globe { margin: 7px 0 0 auto; }
.tv { margin-left: 20px; }
.app { width: 36px; height: 36px; margin-left: 30px; position: relative; }
.tv + .app { margin-left: 29px; }
.chrome::before { content: ""; position: absolute; inset: -10px -9px; border-radius: 5px; background: rgba(255,255,255,.55); border: 1px solid #cbd8e2; }
.chrome svg { position: relative; }
.chrome .badge { position: absolute; left: 18px; top: -7px; }
.app i { position: absolute; left: 14px; bottom: -11px; width: 9px; height: 5px; border-radius: 3px; background: #7f8589; }
.chrome i { left: 6px; width: 24px; background: #27828f; }
.tray { margin-left: auto; display: flex; align-items: center; }
.cl { margin: 0 0 0 28px; } .wf { margin-left: 23px; } .sp { margin-left: 12px; } .bt { margin-left: 12px; }
.clock { width: 118px; display: flex; flex-direction: column; text-align: right; line-height: 25px; margin-top: -3px; letter-spacing: .3px; }
.notif { width: 24px; height: 24px; border-radius: 50%; margin-left: 11px; background: #1d6876; color: #fff; font-size: 16px; line-height: 23px; text-align: center; }
```
